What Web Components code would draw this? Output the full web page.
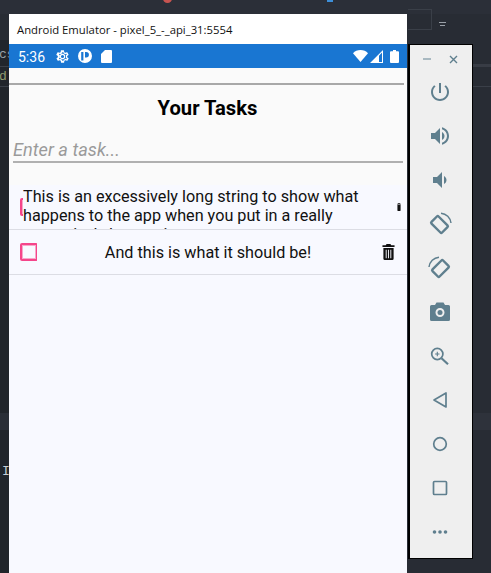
<!DOCTYPE html>
<html>
<head>
<meta charset="utf-8">
<title>Emulator</title>
<style>
    html, body { margin: 0; padding: 0; background: #282c34; overflow: hidden; }
</style>
</head>
<body>
<ide-desktop>
    <emulator-window title="Android Emulator - pixel_5_-_api_31:5554">
        <status-bar time="5:36"></status-bar>
        <task-app>
            <task-item squeezed>This is an excessively long string to show what happens to the app when you put in a really excessively long string</task-item>
            <task-item>And this is what it should be!</task-item>
        </task-app>
    </emulator-window>
    <emulator-toolbar></emulator-toolbar>
</ide-desktop>

<script>
class IdeDesktop extends HTMLElement {
    constructor() {
        super();
        this.shadowDOM = this.attachShadow({mode: 'open'});
        this.shadowDOM.innerHTML = `
            <style>
                :host {
                    display: block;
                    position: relative;
                    width: 491px;
                    height: 573px;
                    overflow: hidden;
                    background: #282c34;
                    font-family: "Liberation Mono", monospace;
                }
                .band { position: absolute; }
                .top { left: 0; right: 0; top: 0; height: 14px; background: #2b2f38; }
                .scrap { position: absolute; font-size: 13px; line-height: 16px; color: #9aa0a8; }
            </style>
            <div class="band top"></div>
            <div class="band" style="left:163px;width:9px;top:-6px;height:9px;border-radius:50%;background:#c75450"></div>
            <div class="band" style="left:327px;width:6px;top:0;height:2px;background:#3d8fd8"></div>
            <div class="band" style="left:0;width:9px;top:40px;height:533px;background:#21252b"></div>
            <div class="band" style="left:0;width:9px;top:66px;height:1px;background:#3a3f48"></div>
            <div class="band" style="left:0;width:9px;top:86px;height:1px;background:#3a3f48"></div>
            <div class="band" style="left:0;width:9px;top:413px;height:17px;background:#2a2e37"></div>
            <div class="band" style="left:408px;width:24px;top:9px;height:21px;border:1px solid #3a3f48;border-left:0;box-sizing:border-box"></div>
            <div class="band" style="left:439px;width:7px;top:22px;height:1px;background:#9aa0a8"></div>
            <div class="band" style="left:440px;width:5px;top:25px;height:1px;background:#9aa0a8"></div>
            <div class="band" style="left:472px;right:0;top:64px;height:3px;background:#383c45"></div>
            <div class="band" style="left:472px;right:0;top:86px;height:1px;background:#3a3f48"></div>
            <div class="band" style="left:472px;right:0;top:413px;height:17px;background:#2e323b"></div>
            <span class="scrap" style="left:-1px;top:47px">cs</span>
            <span class="scrap" style="left:-1px;top:69px;color:#8f9a6e">d</span>
            <span class="scrap" style="left:2px;top:464px;color:#c9ced6">I</span>
            <slot></slot>
        `;
    }
}

class EmulatorWindow extends HTMLElement {
    constructor() {
        super();
        this.shadowDOM = this.attachShadow({mode: 'open'});
    }

    connectedCallback() {
        this.shadowDOM.innerHTML = `
            <style>
                :host {
                    position: absolute;
                    left: 9px;
                    top: 14px;
                    width: 398px;
                    height: 559px;
                    display: flex;
                    flex-direction: column;
                    background: #f8f9ff;
                }
                .title {
                    height: 30px;
                    flex: none;
                    display: flex;
                    align-items: center;
                    padding-left: 8px;
                    background: #fff;
                    color: #111;
                    font: 11.3px "Open Sans", sans-serif;
                }
            </style>
            <div class="title">${this.getAttribute('title')}</div>
            <slot></slot>
        `;
    }
}

class StatusBar extends HTMLElement {
    constructor() {
        super();
        this.shadowDOM = this.attachShadow({mode: 'open'});
    }

    connectedCallback() {
        this.shadowDOM.innerHTML = `
            <style>
                :host {
                    display: flex;
                    align-items: center;
                    flex: none;
                    height: 24px;
                    padding: 0 8px 0 9px;
                    background: #1976d2;
                    color: #fff;
                    font: 14px Roboto, sans-serif;
                }
                .time { width: 25px; margin: 1px 12px 0 0; }
                svg { display: block; fill: #fff; flex: none; }
                .left { display: flex; align-items: center; gap: 8px; flex: 1; }
                .right { display: flex; align-items: center; gap: 2px; }
            </style>
            <span class="time">${this.getAttribute('time')}</span>
            <div class="left">
                <svg width="15" height="15" viewBox="0 0 24 24"><path d="M19.4 13c.1-.3.1-.7.1-1s0-.7-.1-1l2.100-1.600c.2-.2.2-.4.1-.6l-2-3.500c-.1-.2-.4-.3-.6-.2l-2.500 1c-.5-.4-1.100-.7-1.700-1l-.4-2.600c0-.3-.2-.5-.5-.5h-4c-.3 0-.5.2-.5.4l-.4 2.700c-.6.2-1.100.6-1.700 1l-2.500-1c-.2-.1-.5 0-.6.2l-2 3.500c-.1.2-.1.5.1.6L4.600 11c0 .3-.1.7-.1 1s0 .7.1 1l-2.100 1.600c-.2.2-.2.4-.1.6l2 3.500c.1.2.4.3.6.2l2.500-1c.5.4 1.100.7 1.700 1l.4 2.600c0 .2.2.4.5.4h4c.3 0 .5-.2.5-.4l.4-2.600c.6-.3 1.200-.6 1.700-1l2.500 1c.2.1.5 0 .6-.2l2-3.500c.1-.2.1-.5-.1-.6L19.400 13zM17.500 12c0 .3 0 .6-.1 1l-.1.9.7.6.9.7-.7 1.200-1-.4-.9-.4-.7.6c-.4.3-.8.5-1.200.7l-.8.3-.1.9-.2 1.100h-1.400l-.2-1.100-.1-.9-.8-.3c-.4-.2-.8-.4-1.200-.7l-.7-.6-.9.4-1 .4-.7-1.200.9-.7.7-.6-.1-.9c-.1-.4-.1-.7-.1-1s0-.6.1-1l.1-.9-.7-.6-.9-.7.7-1.200 1 .4.9.4.7-.6c.4-.3.8-.5 1.200-.7l.8-.3.1-.9.2-1.100h1.400l.2 1.100.1.9.8.3c.4.2.8.4 1.200.7l.7.6.9-.4 1-.4.7 1.200-.9.7-.7.6.1.9c.1.4.1.7.1 1z"/><circle cx="12" cy="12" r="3.400" fill="none" stroke="#fff" stroke-width="1.800"/></svg>
                <svg width="14" height="14" viewBox="0 0 14 14"><path fill-rule="evenodd" d="M7 0a7 7 0 1 1 0 14A7 7 0 0 1 7 0zM3.200 3v8.400h2.200V3zM7 3v5.400h1.200A2.700 2.700 0 0 0 8.200 3z"/></svg>
                <svg width="11" height="13" viewBox="0 0 11 13" style="margin-left:1px"><path d="M4 0h6a1 1 0 0 1 1 1v11a1 1 0 0 1-1 1H1a1 1 0 0 1-1-1V4z"/></svg>
            </div>
            <div class="right">
                <svg width="15" height="12" viewBox="0 0 15 12"><path d="M7.500 12L0 3.200C1.900 1.200 4.500 0 7.500 0s5.600 1.200 7.500 3.200z"/></svg>
                <svg width="13" height="13" viewBox="0 0 13 13"><path fill-rule="evenodd" d="M13 0v13H0zM12 2.500L9 5.700V12h3z"/></svg>
                <svg width="9" height="13" viewBox="0 0 9 13" style="margin-left:5px"><path d="M3 0h3v1.200h2a1 1 0 0 1 1 1V12a1 1 0 0 1-1 1H1a1 1 0 0 1-1-1V2.200a1 1 0 0 1 1-1h2z"/></svg>
            </div>
        `;
    }
}

class TaskApp extends HTMLElement {
    constructor() {
        super();
        this.shadowDOM = this.attachShadow({mode: 'open'});
        this.shadowDOM.innerHTML = `
            <style>
                :host {
                    display: flex;
                    flex-direction: column;
                    flex: 1;
                    font-family: Roboto, sans-serif;
                    color: #000;
                }
                .head {
                    background: #fafafa;
                    height: 117px;
                    padding-top: 15px;
                    box-sizing: border-box;
                    flex: none;
                }
                .rule { height: 2px; margin-right: 3px; background: #a8a8a8; }
                h1 {
                    margin: 10px 0 0;
                    padding-right: 1px;
                    font-size: 20.2px;
                    line-height: 26px;
                    font-weight: 700;
                    text-align: center;
                }
                .entry {
                    margin: 15px 4px 0;
                    height: 27px;
                    padding-top: 2px;
                    box-sizing: border-box;
                    border-bottom: 2px solid #b0b0b0;
                    font-size: 18.2px;
                    font-style: italic;
                    line-height: 24px;
                    color: #9a9a9a;
                }
            </style>
            <div class="head">
                <div class="rule"></div>
                <h1>Your Tasks</h1>
                <div class="entry">Enter a task...</div>
            </div>
            <slot></slot>
        `;
    }
}

class TaskItem extends HTMLElement {
    constructor() {
        super();
        this.shadowDOM = this.attachShadow({mode: 'open'});
        this.shadowDOM.innerHTML = `
            <style>
                :host {
                    display: flex;
                    align-items: center;
                    height: 45px;
                    box-sizing: border-box;
                    padding: 0 10px 0 11px;
                    border-bottom: 1px solid #dcdde4;
                    font: 16.2px/19px Roboto, sans-serif;
                    color: #111;
                }
                .check { width: 17px; flex: none; overflow: hidden; }
                .box {
                    display: block;
                    width: 18px;
                    height: 18px;
                    box-sizing: border-box;
                    border: 2px solid #f5458a;
                    box-shadow: inset 0 0 0 1px rgba(245, 69, 138, .45);
                    border-radius: 2px;
                }
                .text { flex: 1; min-width: 0; text-align: center; }
                .trash { width: 18px; flex: none; display: flex; justify-content: center; overflow: hidden; }
                svg { display: block; flex: none; }
                :host([squeezed]) { padding-right: 6px; }
                :host([squeezed]) .check { width: 3px; }
                :host([squeezed]) .text {
                    height: 44px;
                    padding-top: 2px;
                    box-sizing: border-box;
                    overflow: hidden;
                    text-align: left;
                }
                :host([squeezed]) .trash { width: 4px; }
                :host([squeezed]) svg { width: 4px; height: 8px; }
                :host([squeezed]) .slats { display: none; }
                :host([squeezed]) path { fill-rule: nonzero; }
            </style>
            <div class="check"><span class="box"></span></div>
            <div class="text"><slot></slot></div>
            <div class="trash">
                <svg width="13" height="16" viewBox="0 0 14 18" preserveAspectRatio="none" fill="#111">
                    <path d="M5 0h4l1 1.500h3.500V3.500H.5V1.500H4zM1.500 4.500h11V16.500a1.500 1.500 0 0 1-1.500 1.500H3a1.500 1.500 0 0 1-1.500-1.500z"/>
                    <path class="slats" fill="#f8f9ff" d="M4 6.500h1V16H4zM6.500 6.500h1V16h-1zM9 6.500h1V16H9z"/>
                </svg>
            </div>
        `;
    }
}

class ToolbarIcon extends HTMLElement {
    constructor() {
        super();
        this.shadowDOM = this.attachShadow({mode: 'open'});
        this.shadowDOM.innerHTML = `
            <style>
                :host { display: flex; align-items: center; justify-content: center; height: 44px; flex: none; }
                ::slotted(svg) { display: block; fill: #5f7f8e; }
            </style>
            <slot></slot>
        `;
    }
}

class EmulatorToolbar extends HTMLElement {
    constructor() {
        super();
        this.shadowDOM = this.attachShadow({mode: 'open'});
    }

    connectedCallback() {
        const line = 'fill="none" stroke="#5f7f8e" stroke-width="1.700"';
        const icons = [
            '<path d="M13 3h-2v10h2V3zm4.830 2.170l-1.420 1.420C17.990 7.860 19 9.810 19 12c0 3.870-3.130 7-7 7s-7-3.130-7-7c0-2.190 1.010-4.140 2.580-5.420L6.170 5.170C4.230 6.820 3 9.260 3 12c0 4.970 4.030 9 9 9s9-4.030 9-9c0-2.740-1.230-5.180-3.170-6.830z"/>',
            '<path d="M3 9v6h4l5 5V4L7 9H3zm13.500 3c0-1.770-1.020-3.290-2.500-4.030v8.050c1.480-.73 2.500-2.250 2.500-4.020zM14 3.230v2.060c2.890.86 5 3.540 5 6.710s-2.110 5.850-5 6.710v2.060c4.010-.91 7-4.490 7-8.770s-2.990-7.860-7-8.770z"/>',
            '<path d="M18.500 12c0-1.770-1.020-3.290-2.500-4.030v8.050c1.480-.73 2.500-2.250 2.500-4.020zM5 9v6h4l5 5V4L9 9H5z"/>',
            `<g ${line}><rect x="6.500" y="5" width="10" height="15" rx="1.200" transform="rotate(-45 11.500 12.500)" stroke-width="2.400"/><path d="M13 1.200A11 11 0 0 1 23 11" stroke-width="1.500"/></g>`,
            `<g ${line}><rect x="7.500" y="5" width="10" height="15" rx="1.200" transform="rotate(45 12.500 12.500)" stroke-width="2.400"/><path d="M11 1.200A11 11 0 0 0 1 11" stroke-width="1.500"/></g>`,
            '<path fill-rule="evenodd" d="M8.500 2.500h7L17 5h3.500A1.500 1.500 0 0 1 22 6.500v13a1.500 1.500 0 0 1-1.500 1.500h-17A1.500 1.500 0 0 1 2 19.500v-13A1.500 1.500 0 0 1 3.500 5H7zM12 8a4.500 4.500 0 1 0 0 9 4.500 4.500 0 0 0 0-9z"/><circle cx="12" cy="12.500" r="2.500"/>',
            `<g ${line}><circle cx="9.300" cy="10" r="5.600"/><path d="M13.500 14.200L20 20.200" stroke-width="2.200"/><path d="M9.300 7.800v4.400M7.100 10h4.400" stroke-width="1.100"/></g>`,
            `<path d="M18 5v14L6 12z" ${line} stroke-linejoin="round"/>`,
            `<circle cx="12" cy="12" r="6.300" ${line}/>`,
            `<rect x="5.500" y="5.500" width="13" height="13" rx="1" ${line}/>`,
            '<circle cx="6.500" cy="12" r="1.800"/><circle cx="12" cy="12" r="1.800"/><circle cx="17.500" cy="12" r="1.800"/>'
        ];
        this.shadowDOM.innerHTML = `
            <style>
                :host {
                    position: absolute;
                    left: 408px;
                    top: 44px;
                    width: 65px;
                    height: 515px;
                    box-sizing: border-box;
                    padding-right: 2px;
                    background: #efefef;
                    border: 1px solid #000;
                    border-left-width: 2px;
                    display: flex;
                    flex-direction: column;
                }
                .controls {
                    display: flex;
                    justify-content: space-between;
                    align-items: center;
                    height: 25px;
                    box-sizing: border-box;
                    flex: none;
                    padding: 3px 12px 0 13px;
                }
                .stack { display: flex; flex-direction: column; }
                .minimize { width: 8px; height: 2px; background: #a9b9c1; }
                svg.close { display: block; stroke: #5f7f8e; stroke-width: 1.400; fill: none; }
            </style>
            <div class="controls">
                <div class="minimize"></div>
                <svg class="close" width="9" height="9" viewBox="0 0 9 9"><path d="M1 1l7 7M8 1L1 8"/></svg>
            </div>
            <div class="stack">
                ${icons.map(icon => `<toolbar-icon><svg width="24" height="24" viewBox="0 0 24 24">${icon}</svg></toolbar-icon>`).join('')}
            </div>
        `;
    }
}

customElements.define('ide-desktop', IdeDesktop);
customElements.define('emulator-window', EmulatorWindow);
customElements.define('status-bar', StatusBar);
customElements.define('task-app', TaskApp);
customElements.define('task-item', TaskItem);
customElements.define('toolbar-icon', ToolbarIcon);
customElements.define('emulator-toolbar', EmulatorToolbar);
</script>
</body>
</html>
